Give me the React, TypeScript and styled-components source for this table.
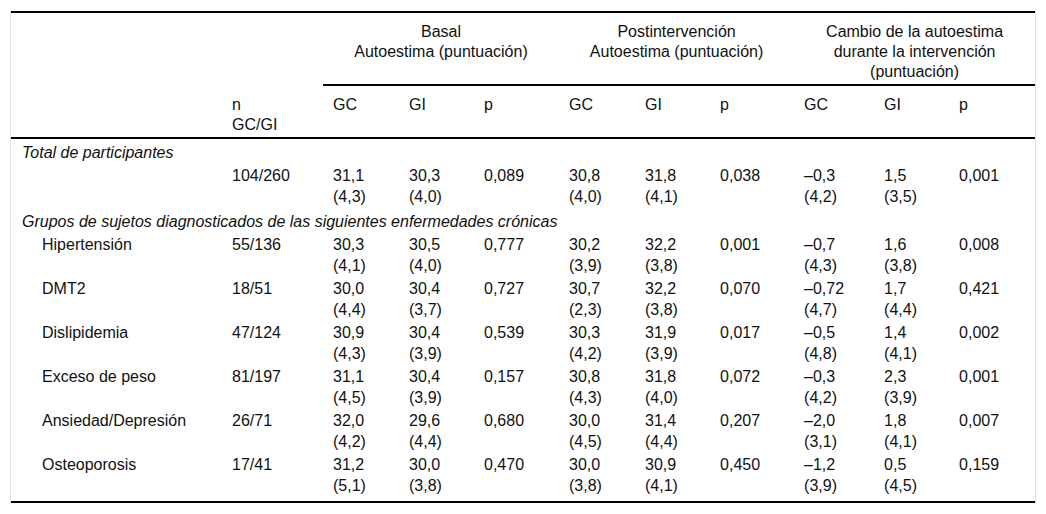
import React from 'react'
import styled, { createGlobalStyle } from 'styled-components'

const GlobalStyle = createGlobalStyle`
	body {
		margin: 0;
		background: #ffffff;
		font-family: 'Liberation Sans', Arial, Helvetica, sans-serif;
		color: #111111;
	}
`

const Frame = styled.div`
	margin: 11px 0 0 10px;
	width: 1024px;
	border-left: 1px solid #e4e4e4;
	border-right: 1px solid #e4e4e4;
`

const Table = styled.table`
	width: 1024px;
	table-layout: fixed;
	border-collapse: separate;
	border-spacing: 0;
	font-size: 16px;
`

const HeadCell = styled.th<{ top?: boolean; rule?: boolean; center?: boolean }>`
	padding: 9px 10px 2px;
	line-height: 20px;
	font-weight: normal;
	vertical-align: top;
	text-align: ${(p) => (p.center ? 'center' : 'left')};
	border-top: ${(p) => (p.top ? '2px solid #000' : '0')};
	border-bottom: ${(p) => (p.rule ? '2px solid #000' : '0')};
`

const SectionCell = styled.td`
	padding: 3px 10px 1px 11px;
	line-height: 21px;
	font-style: italic;
	white-space: nowrap;
`

const Cell = styled.td<{ indent?: boolean }>`
	padding: 1px 10px 1px ${(p) => (p.indent ? '31px' : '10px')};
	line-height: 21px;
	vertical-align: top;
	white-space: nowrap;
`

const BodyRow = styled.tr`
	&:last-child td {
		padding-bottom: 5px;
		border-bottom: 2px solid #000;
	}
`

const widths = [211, 101, 76, 75, 85, 76, 75, 84, 80, 75, 86]

type Row = { label: string; n: string; v: string[] }

const total: Row = {
	label: '',
	n: '104/260',
	v: ['31,1|(4,3)', '30,3|(4,0)', '0,089', '30,8|(4,0)', '31,8|(4,1)', '0,038', '–0,3|(4,2)', '1,5|(3,5)', '0,001'],
}

const groups: Row[] = [
	{ label: 'Hipertensión', n: '55/136', v: ['30,3|(4,1)', '30,5|(4,0)', '0,777', '30,2|(3,9)', '32,2|(3,8)', '0,001', '–0,7|(4,3)', '1,6|(3,8)', '0,008'] },
	{ label: 'DMT2', n: '18/51', v: ['30,0|(4,4)', '30,4|(3,7)', '0,727', '30,7|(2,3)', '32,2|(3,8)', '0,070', '–0,72|(4,7)', '1,7|(4,4)', '0,421'] },
	{ label: 'Dislipidemia', n: '47/124', v: ['30,9|(4,3)', '30,4|(3,9)', '0,539', '30,3|(4,2)', '31,9|(3,9)', '0,017', '–0,5|(4,8)', '1,4|(4,1)', '0,002'] },
	{ label: 'Exceso de peso', n: '81/197', v: ['31,1|(4,5)', '30,4|(3,9)', '0,157', '30,8|(4,3)', '31,8|(4,0)', '0,072', '–0,3|(4,2)', '2,3|(3,9)', '0,001'] },
	{ label: 'Ansiedad/Depresión', n: '26/71', v: ['32,0|(4,2)', '29,6|(4,4)', '0,680', '30,0|(4,5)', '31,4|(4,4)', '0,207', '–2,0|(3,1)', '1,8|(4,1)', '0,007'] },
	{ label: 'Osteoporosis', n: '17/41', v: ['31,2|(5,1)', '30,0|(3,8)', '0,470', '30,0|(3,8)', '30,9|(4,1)', '0,450', '–1,2|(3,9)', '0,5|(4,5)', '0,159'] },
]

const twoLines = (s: string) => {
	const [a, b] = s.split('|')
	return b ? (
		<>
			{a}
			<br />
			{b}
		</>
	) : (
		a
	)
}

const DataRow: React.FC<{ row: Row; indent?: boolean }> = ({ row, indent }) => (
	<BodyRow>
		<Cell indent={indent}>{row.label}</Cell>
		<Cell>{row.n}</Cell>
		{row.v.map((x, i) => (
			<Cell key={i}>{twoLines(x)}</Cell>
		))}
	</BodyRow>
)

export default function App() {
	return (
		<>
			<GlobalStyle />
			<Frame>
				<Table>
					<colgroup>
						{widths.map((w, i) => (
							<col key={i} style={{ width: w }} />
						))}
					</colgroup>
					<thead>
						<tr>
							<HeadCell top colSpan={2} />
							<HeadCell top rule center colSpan={3}>
								Basal
								<br />
								Autoestima (puntuación)
							</HeadCell>
							<HeadCell top rule center colSpan={3}>
								Postintervención
								<br />
								Autoestima (puntuación)
							</HeadCell>
							<HeadCell top rule center colSpan={3}>
								Cambio de la autoestima
								<br />
								durante la intervención
								<br />
								(puntuación)
							</HeadCell>
						</tr>
						<tr>
							<HeadCell rule />
							<HeadCell rule>
								n
								<br />
								GC/GI
							</HeadCell>
							{['GC', 'GI', 'p', 'GC', 'GI', 'p', 'GC', 'GI', 'p'].map((h, i) => (
								<HeadCell rule key={i}>
									{h}
								</HeadCell>
							))}
						</tr>
					</thead>
					<tbody>
						<tr>
							<SectionCell colSpan={11}>Total de participantes</SectionCell>
						</tr>
						<DataRow row={total} />
						<tr>
							<SectionCell colSpan={11}>Grupos de sujetos diagnosticados de las siguientes enfermedades crónicas</SectionCell>
						</tr>
						{groups.map((g) => (
							<DataRow key={g.label} row={g} indent />
						))}
					</tbody>
				</Table>
			</Frame>
		</>
	)
}
